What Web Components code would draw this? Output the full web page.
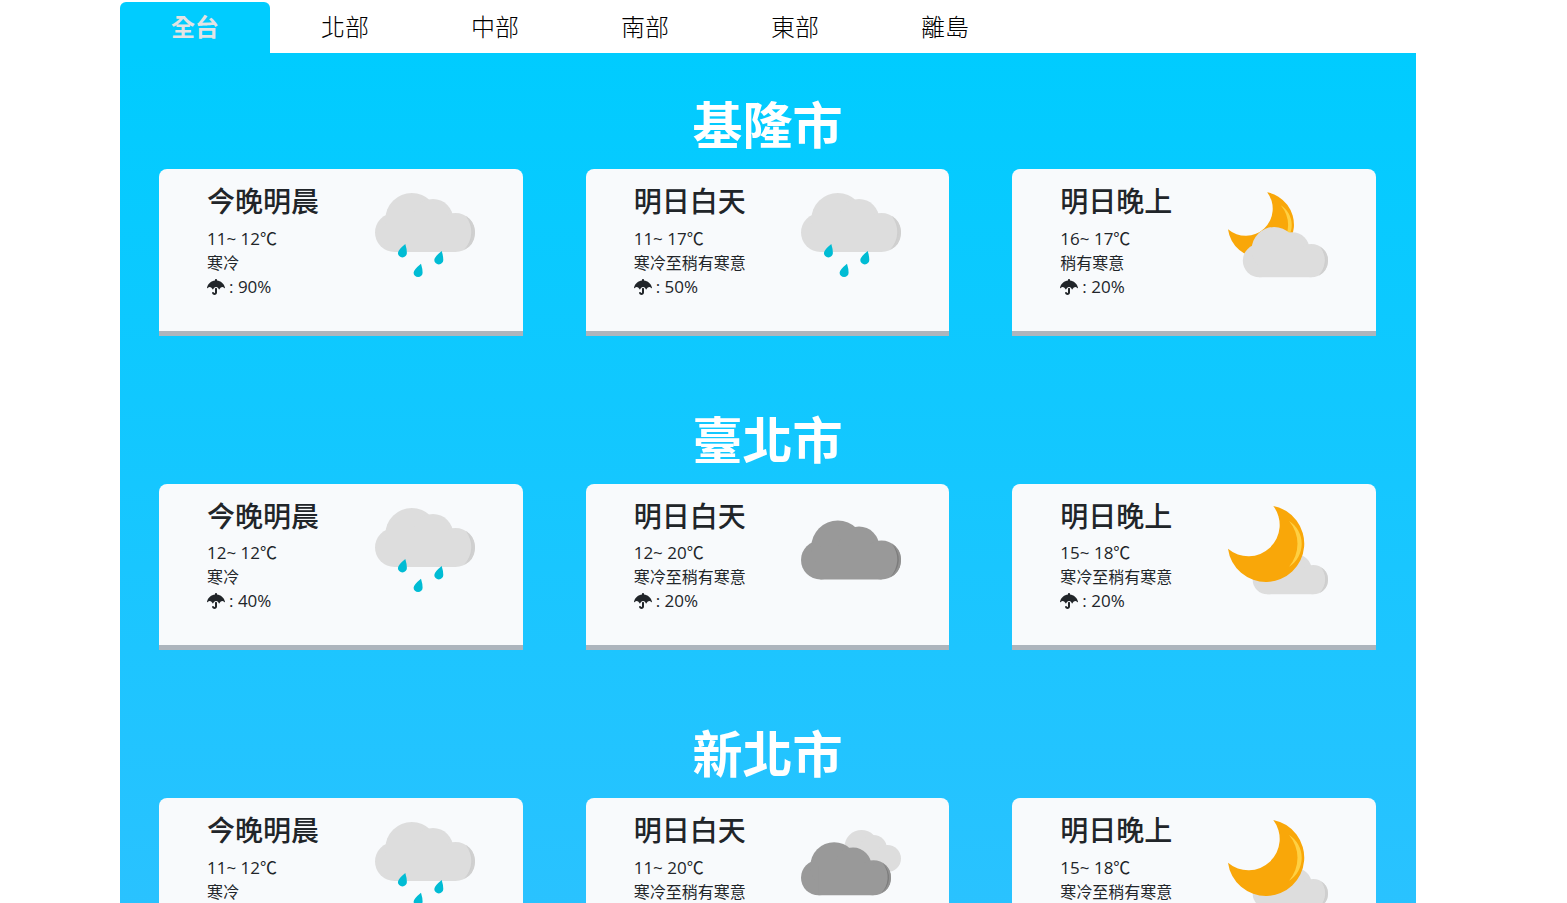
<!DOCTYPE html>
<html lang="zh-Hant">
<head>
<meta charset="utf-8">
<meta name="viewport" content="width=device-width, initial-scale=1">
<title>天氣預報</title>
<style>
  body {
    margin: 0;
    background: #fff;
    color: #212529;
    font: 16px/24px "Open Sans", "Noto Sans CJK TC", sans-serif;
  }
</style>
</head>
<body>
<weather-page>
  <region-tabs slot="tabs">
    <region-tab active>全台</region-tab>
    <region-tab>北部</region-tab>
    <region-tab>中部</region-tab>
    <region-tab>南部</region-tab>
    <region-tab>東部</region-tab>
    <region-tab>離島</region-tab>
  </region-tabs>
  <city-forecast>
    <span slot="name">基隆市</span>
    <weather-card icon="rain"><span slot="period">今晚明晨</span><span slot="temp">11~ 12℃</span><span slot="feel">寒冷</span><span slot="rain">: 90%</span></weather-card>
    <weather-card icon="rain"><span slot="period">明日白天</span><span slot="temp">11~ 17℃</span><span slot="feel">寒冷至稍有寒意</span><span slot="rain">: 50%</span></weather-card>
    <weather-card icon="night-cloudy"><span slot="period">明日晚上</span><span slot="temp">16~ 17℃</span><span slot="feel">稍有寒意</span><span slot="rain">: 20%</span></weather-card>
  </city-forecast>
  <city-forecast>
    <span slot="name">臺北市</span>
    <weather-card icon="rain"><span slot="period">今晚明晨</span><span slot="temp">12~ 12℃</span><span slot="feel">寒冷</span><span slot="rain">: 40%</span></weather-card>
    <weather-card icon="overcast"><span slot="period">明日白天</span><span slot="temp">12~ 20℃</span><span slot="feel">寒冷至稍有寒意</span><span slot="rain">: 20%</span></weather-card>
    <weather-card icon="night"><span slot="period">明日晚上</span><span slot="temp">15~ 18℃</span><span slot="feel">寒冷至稍有寒意</span><span slot="rain">: 20%</span></weather-card>
  </city-forecast>
  <city-forecast>
    <span slot="name">新北市</span>
    <weather-card icon="rain"><span slot="period">今晚明晨</span><span slot="temp">11~ 12℃</span><span slot="feel">寒冷</span><span slot="rain">: 40%</span></weather-card>
    <weather-card icon="cloudy"><span slot="period">明日白天</span><span slot="temp">11~ 20℃</span><span slot="feel">寒冷至稍有寒意</span><span slot="rain">: 20%</span></weather-card>
    <weather-card icon="night"><span slot="period">明日晚上</span><span slot="temp">15~ 18℃</span><span slot="feel">寒冷至稍有寒意</span><span slot="rain">: 20%</span></weather-card>
  </city-forecast>
</weather-page>

<script>
// Base class: renders the subclass's template into an open shadow root.
class Base extends HTMLElement {
  constructor() {
    super();
    const t = document.createElement('template');
    t.innerHTML = this.constructor.html;
    this.attachShadow({ mode: 'open' }).append(t.content.cloneNode(true));
  }
}

customElements.define('weather-page', class extends Base {
  static html = `
    <style>
      :host { display: block; padding: 2px 151px 0 120px; }
      main { background: linear-gradient(#00ccff, #2ec1ff); }
      @media (max-width: 1100px) { :host { padding: 2px 16px 0; } }
    </style>
    <slot name="tabs"></slot>
    <main><slot></slot></main>`;
});

customElements.define('region-tabs', class extends Base {
  static html = `
    <style>
      :host { display: block; }
      nav { display: flex; flex-wrap: wrap; }
    </style>
    <nav aria-label="地區"><slot></slot></nav>`;
});

customElements.define('region-tab', class extends Base {
  static html = `
    <style>
      :host { display: block; flex: 0 1 150px; }
      button {
        display: block; width: 100%; margin: 0; border: 0;
        padding: 7px 0 8px;
        border-radius: 6px 6px 0 0;
        background: transparent; color: #000;
        font-family: inherit; font-size: 24px; line-height: 36px; font-weight: 300;
        cursor: pointer;
      }
      :host([active]) button { background: #00ccff; color: #e3e3e3; font-weight: 700; }
    </style>
    <button type="button"><slot></slot></button>`;
  connectedCallback() {
    this.shadowRoot.querySelector('button').addEventListener('click', () => {
      for (const tab of this.parentElement.children) tab.toggleAttribute('active', tab === this);
    });
  }
});

customElements.define('city-forecast', class extends Base {
  static html = `
    <style>
      :host { display: block; padding: 42px 40px 32px 39px; }
      h2 {
        margin: 0 0 14px; color: #fff; text-align: center;
        font-size: 50px; line-height: 60px; font-weight: 700;
      }
      .row { display: grid; grid-template-columns: repeat(3, 1fr); gap: 63px; }
      @media (max-width: 1300px) { .row { gap: 24px; } }
      @media (max-width: 1100px) { .row { grid-template-columns: 1fr; } }
    </style>
    <h2><slot name="name"></slot></h2>
    <div class="row"><slot></slot></div>`;
});

customElements.define('weather-card', class extends Base {
  static html = `
    <style>
      :host {
        display: flex; justify-content: space-between; align-items: flex-start;
        padding: 16px 48px 32px;
        border-bottom: 5px solid #adb5bd;
        border-radius: 8px 8px 0 0;
        background: #f8fafc;
      }
      h3 { margin: 0 0 8px; font-size: 28px; line-height: 1.2; font-weight: 500; white-space: nowrap; }
      p { margin: 0; }
      .figure { font-size: 17px; }
      .rain { display: flex; align-items: center; gap: 4px; }
      .rain svg { width: 18px; height: 16px; fill: currentColor; }
    </style>
    <div>
      <h3><slot name="period"></slot></h3>
      <p class="figure"><slot name="temp"></slot></p>
      <p><slot name="feel"></slot></p>
      <p class="figure rain">
        <svg viewBox="0 0 576 512" aria-hidden="true"><path d="M575.7 280.8C547.1 144.5 437.3 62.6 320 49.9V32c0-17.7-14.3-32-32-32s-32 14.3-32 32v17.9C138.3 62.6 29.5 144.5.3 280.8c-2.2 10.1 8.5 21.3 18.7 11.4 52-55 107.7-52.4 158.6 37 5.3 9.5 14.9 8.6 19.7 0 20.2-35.4 44.9-73.2 90.7-73.2 58.5 0 88.2 68.8 90.7 73.2 4.8 8.6 14.4 9.5 19.7 0 51-89.5 107.1-91.4 158.6-37 10.3 10 20.9-1.3 18.7-11.4zM256 301.7V432c0 8.8-7.2 16-16 16-7.8 0-13.2-5.3-15.1-10.7-5.9-16.7-24.1-25.4-40.8-19.5-16.7 5.9-25.4 24.2-19.5 40.8 11.2 31.9 41.6 53.3 75.4 53.3 44.1 0 80-35.9 80-80V301.6c-9.1-7.9-19.8-13.6-32-13.6-12.3.1-22.4 4.8-32 13.7z"/></svg>
        <slot name="rain"></slot>
      </p>
    </div>
    <weather-icon></weather-icon>`;
  connectedCallback() {
    this.shadowRoot.querySelector('weather-icon').setAttribute('name', this.getAttribute('icon'));
  }
});

// Cloud built from four lobes, with a shaded crescent on its right lobe.
const cloud = (fill, shade, edge, transform) => `
  <g transform="${transform}">
    <g fill="${fill}">
      <circle cx="19.5" cy="47.5" r="19.5"/><circle cx="36.8" cy="34.5" r="26.5"/>
      <circle cx="58" cy="34.2" r="20.2"/><circle cx="80.5" cy="47.5" r="19.5"/>
      <path d="M19.5 34h61v33h-61z"/>
    </g>
    <path fill="${edge}" d="M91 31.1A19.5 19.5 0 0 1 89 65.1 25 25 0 0 0 91 31.1z"/>
    <path fill="${shade}" d="M91 31.6A21.5 21.5 0 0 1 89 64.6 25 25 0 0 0 91 31.6z"/>
  </g>`;
const light = t => cloud('#ddd', '#cecece', '#d0d0d0', t);
const dark = t => cloud('#999', '#7c7c7c', '#919191', t);
const moon = t => `
  <g transform="${t}">
    <path fill="#f9a709" d="M45.3 6A38.3 38.3 0 1 1 0 48.7 31.3 31.3 0 0 0 45.3 6z"/>
    <path fill="#ffd042" d="M61 21A26.9 26.9 0 0 1 61 66.7 35 35 0 0 0 61 21z"/>
  </g>`;
const drop = (x, y) => `<path fill="#00bcd4" transform="translate(${x} ${y})" d="M0 0Q-7.4 6-7.4 9a4.5 4.4 0 0 0 9 0Q1.6 5 0 0z"/>`;
const ICONS = {
  rain: light('') + drop(30.3, 59) + drop(66.7, 66) + drop(46, 78.7),
  overcast: dark('translate(0 12.5)'),
  cloudy: `<g fill="#ddd"><circle cx="60.5" cy="33" r="17"/><circle cx="72.5" cy="34.5" r="13.5"/>
    <circle cx="86.5" cy="44.5" r="13.5"/><path d="M55 34h31v24H55z"/></g>` + dark('translate(0 21) scale(.9)'),
  'night-cloudy': moon('translate(0 2.1) scale(.865)') + light('translate(14.8 35.2) scale(.852)'),
  night: light('translate(24.7 43.9) scale(.753)') + moon('')
};

customElements.define('weather-icon', class extends Base {
  static html = `
    <style>
      :host { display: block; flex: none; }
      svg { display: block; width: 100px; height: 100px; }
    </style>
    <svg viewBox="0 0 100 100" aria-hidden="true"></svg>`;
  static observedAttributes = ['name'];
  attributeChangedCallback(_, __, name) {
    this.shadowRoot.querySelector('svg').innerHTML = ICONS[name] || '';
  }
});
</script>
</body>
</html>
